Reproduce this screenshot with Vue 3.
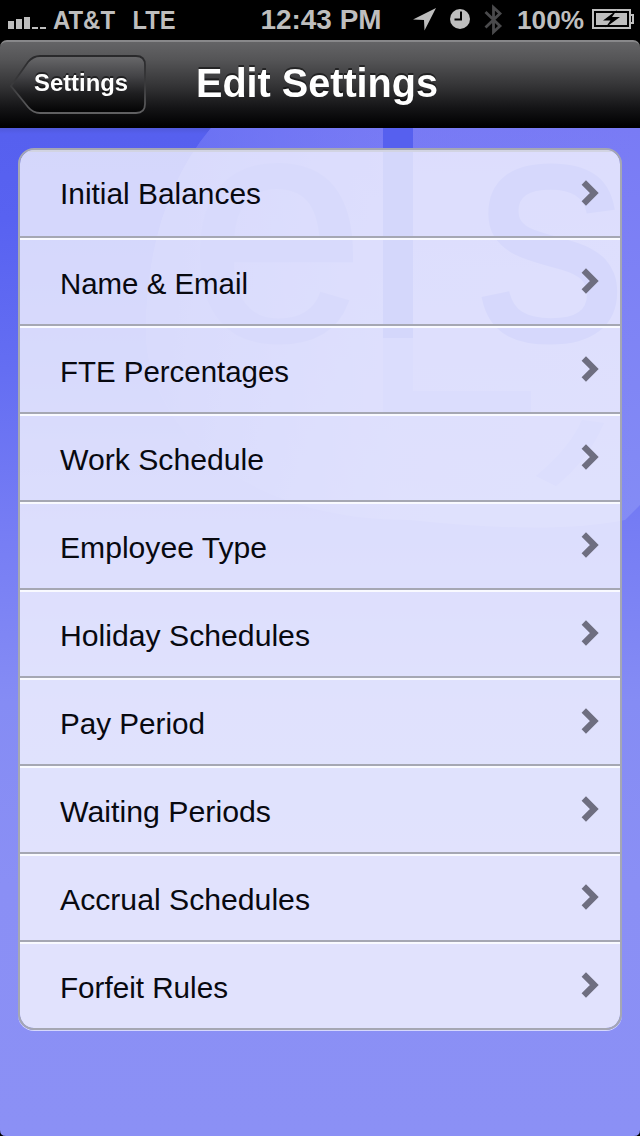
<script setup>
const items = [
  { label: 'Initial Balances', width: 201 },
  { label: 'Name & Email', width: 188 },
  { label: 'FTE Percentages', width: 229 },
  { label: 'Work Schedule', width: 204 },
  { label: 'Employee Type', width: 207 },
  { label: 'Holiday Schedules', width: 250 },
  { label: 'Pay Period', width: 145 },
  { label: 'Waiting Periods', width: 211 },
  { label: 'Accrual Schedules', width: 250 },
  { label: 'Forfeit Rules', width: 168 },
]
</script>

<template>
  <div class="screen">
    <header class="status">
      <svg width="640" height="40" viewBox="0 0 640 40">
        <g fill="#bebebe">
          <path d="M8 21h6v8H8zM16 19h6v10h-6zM24 17h6v12h-6zM32 27h6v2h-6zM40 27h6v2h-6z" />
          <g class="status-text">
            <text x="53" y="29" textLength="62" lengthAdjust="spacingAndGlyphs">AT&amp;T</text>
            <text x="132.500" y="29" textLength="43" lengthAdjust="spacingAndGlyphs">LTE</text>
            <text x="260.500" y="29" textLength="121" lengthAdjust="spacingAndGlyphs" class="clock">12:43 PM</text>
            <text x="517" y="29" textLength="67" lengthAdjust="spacingAndGlyphs">100%</text>
          </g>
          <path d="M436 8L413 19.500l11 .5.500 10.500z" />
          <circle cx="460" cy="19" r="10" />
        </g>
        <path d="M461 11.500v8h-6.500" fill="none" stroke="#000" stroke-width="2" />
        <path d="M485.500 12l14.500 14-6.500 6V7.500l6.500 6-14.500 14" fill="none" stroke="#4a4a4c" stroke-width="2.800" />
        <path d="M593 10h37v18h-37z" fill="none" stroke="#bebebe" stroke-width="2" />
        <path d="M596 13h31v12h-31z" fill="#bebebe" />
        <path d="M631 15h2v8h-2" fill="none" stroke="#bebebe" stroke-width="2" />
        <path d="M617 10L603 20.500h7.500L605.500 27.500 620 17h-8z" fill="#000" />
      </svg>
    </header>

    <nav class="navbar">
      <button class="back">
        <svg class="back-shape" width="140" height="62" viewBox="0 0 140 62">
          <defs>
            <linearGradient id="backFill" x1="0" y1="0" x2="0" y2="1">
              <stop offset="0" stop-color="#69696b" />
              <stop offset=".35" stop-color="#444447" />
              <stop offset=".65" stop-color="#1f1f21" />
              <stop offset="1" stop-color="#020203" />
            </linearGradient>
            <linearGradient id="backLine" x1="0" y1="0" x2="0" y2="1">
              <stop offset="0" stop-color="#29292b" />
              <stop offset=".5" stop-color="#3a3a3c" />
              <stop offset="1" stop-color="#606062" />
            </linearGradient>
          </defs>
          <path d="M2 33L19 9Q24 3 31 3H127Q136 3 136 12V51Q136 60 127 60H31Q24 60 19 54Z" fill="url(#backFill)" stroke="url(#backLine)" stroke-width="1.800" />
        </svg>
        <svg class="back-label" width="100" height="36"><text x="2" y="25" textLength="94" lengthAdjust="spacingAndGlyphs">Settings</text></svg>
      </button>
      <h1 class="title">
        <svg width="250" height="60"><text x="4" y="46" textLength="242" lengthAdjust="spacingAndGlyphs">Edit Settings</text></svg>
      </h1>
    </nav>

    <main class="content">
      <svg class="watermark" width="640" height="1008" viewBox="0 128 640 1008">
        <defs>
          <linearGradient id="disc" x1="0" y1="0" x2="0" y2="1">
            <stop offset="0" stop-color="#797bf5" />
            <stop offset="1" stop-color="#848cf5" />
          </linearGradient>
          <linearGradient id="discShade" x1="0" y1="0" x2="1" y2="0">
            <stop offset="0" stop-color="#606af2" stop-opacity=".75" />
            <stop offset=".5" stop-color="#6a72f3" stop-opacity=".1" />
            <stop offset="1" stop-color="#6a72f3" stop-opacity="0" />
          </linearGradient>
        </defs>
        <path d="M211 128Q147 205 146 330C146 420 235 520 410 520Q550 535 625 520L640 505V128Z" fill="url(#disc)" />
        <path d="M211 128Q147 205 146 330C146 420 235 520 410 520Q550 535 625 520L640 505V128Z" fill="url(#discShade)" />
        <g fill="#5f69f0">
          <path d="M383 128h30v210h-30z" fill="#5660ef" />
          <path d="M383 338h30v53h118v21H383z" fill="#7179f4" />
          <text class="soft" transform="translate(189 339) scale(.96 .98)">e</text>
          <text class="bold" transform="translate(476 339) scale(.91 .98)">s</text>
        </g>
        <path d="M536 476Q570 448 582 420L604 423Q588 460 556 486Z" fill="#747cf4" />
      </svg>
      <ul class="list">
        <li v-for="item in items" :key="item.label" class="row">
          <svg class="label" width="270" height="44"><text x="1" y="32" :textLength="item.width" lengthAdjust="spacingAndGlyphs">{{ item.label }}</text></svg>
          <svg class="chevron" width="18" height="28" viewBox="0 0 18 28"><path d="M2.800 3.500L13.300 14 2.800 24.500" fill="none" stroke="#6e6e80" stroke-width="6.200" /></svg>
        </li>
      </ul>
      <svg class="corner corner-left" width="6" height="6"><path d="M0 0Q0 6 6 6H0z" /></svg>
      <svg class="corner corner-right" width="6" height="6"><path d="M6 0Q6 6 0 6H6z" /></svg>
    </main>
  </div>
</template>

<style>
body { background: #000; }
</style>

<style scoped>
.screen {
  width: 640px;
  height: 1136px;
  display: flex;
  flex-direction: column;
  overflow: hidden;
  background: #000;
  font-family: "Liberation Sans", Arial, sans-serif;
}
svg { display: block; flex: none; }
.status { height: 40px; }
.status-text { font-size: 26px; font-weight: 700; }
.clock { font-size: 27px; }
.navbar {
  box-sizing: border-box;
  height: 88px;
  display: flex;
  align-items: flex-start;
  border-top: 2px solid #88888a;
  border-radius: 7px 7px 0 0;
  background: linear-gradient(#646466, #555557 20%, #343436 51%, #151517 76%, #020203 96%, #000);
}
.back {
  width: 140px;
  height: 62px;
  margin: 11px 0 0 9px;
  padding: 0;
  border: 0;
  background: none;
  display: grid;
  font-family: inherit;
}
.back-shape, .back-label { grid-area: 1 / 1; }
.back-label {
  margin: 13px 0 0 23px;
  fill: #fff;
  font-size: 24px;
  font-weight: 700;
  filter: drop-shadow(0 -2px 0 rgba(0, 0, 0, .5));
}
.title {
  margin: 9px 0 0 43px;
  fill: #fff;
  font-size: 40px;
  filter: drop-shadow(0 -2px 0 rgba(0, 0, 0, .5));
}
.content {
  position: relative;
  height: 1008px;
  padding: 20px 18px 0;
  box-sizing: border-box;
  background: linear-gradient(#5059dc 0, #5660ef 6px, #5862f1 9%, #646ef2 24%, #757cf4 39%, #858cf4 57%, #8a8ff5 75%, #8b90f5);
}
.watermark { position: absolute; left: 0; top: 0; }
.watermark text { font-size: 329px; stroke-width: 5px; }
.soft { fill: #666ff1; stroke: #666ff1; }
.bold { fill: #5d67f0; stroke: #5d67f0; }
.list {
  position: relative;
  box-sizing: border-box;
  height: 882px;
  margin: 0;
  padding: 0;
  list-style: none;
  border: 2px solid #a5a7b3;
  border-radius: 16px;
  overflow: hidden;
  background: rgba(252, 252, 255, .76);
  background-clip: padding-box;
  box-shadow: 0 1px 0 rgba(255, 255, 255, .65);
}
.row {
  box-sizing: border-box;
  height: 88px;
  display: flex;
  align-items: flex-start;
  justify-content: space-between;
  padding: 22px 21px 0 39px;
  border-top: 2px solid #f9faff;
  border-bottom: 2px solid #a5a7b3;
}
.row:first-child {
  padding-top: 20px;
  border-top-color: #d2d4e2;
}
.row:last-child { border-bottom: 0; }
.label { font-size: 30px; fill: #080910; }
.chevron { margin-top: 5px; }
.row:first-child .chevron { margin-top: 7px; }
.corner { position: absolute; bottom: 0; fill: #000; }
.corner-left { left: 0; }
.corner-right { right: 0; }
</style>
